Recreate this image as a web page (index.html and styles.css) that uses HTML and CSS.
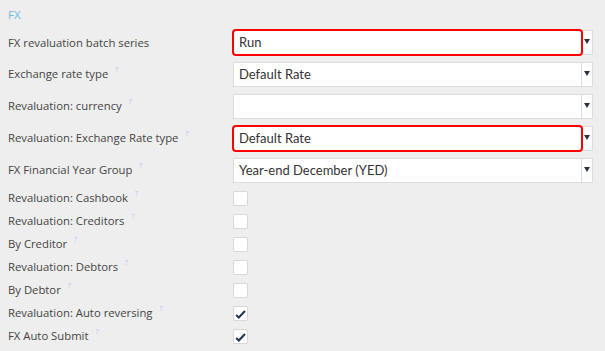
FILE: index.html
```html
<!DOCTYPE html>
<html lang="en">
<head>
    <meta charset="UTF-8">
    <title>FX settings</title>
    <link rel="stylesheet" href="styles.css">
</head>
<body>
    <div class="section">
        <div class="section-title">FX</div>

        <div class="row">
            <div class="label">FX revaluation batch series</div>
            <div class="select">
                <div class="select-box invalid">Run</div>
                <div class="select-btn"><span class="arrow"></span></div>
            </div>
        </div>
        <div class="row">
            <div class="label">Exchange rate type <span class="help">?</span></div>
            <div class="select">
                <div class="select-box">Default Rate</div>
                <div class="select-btn"><span class="arrow"></span></div>
            </div>
        </div>
        <div class="row">
            <div class="label">Revaluation: currency <span class="help">?</span></div>
            <div class="select">
                <div class="select-box"></div>
                <div class="select-btn"><span class="arrow"></span></div>
            </div>
        </div>
        <div class="row">
            <div class="label">Revaluation: Exchange Rate type <span class="help">?</span></div>
            <div class="select">
                <div class="select-box invalid">Default Rate</div>
                <div class="select-btn"><span class="arrow"></span></div>
            </div>
        </div>
        <div class="row">
            <div class="label">FX Financial Year Group <span class="help">?</span></div>
            <div class="select">
                <div class="select-box">Year-end December (YED)</div>
                <div class="select-btn"><span class="arrow"></span></div>
            </div>
        </div>

        <div class="checks">
            <div class="row check-row">
                <div class="label">Revaluation: Cashbook <span class="help">?</span></div>
                <div class="checkbox"></div>
            </div>
            <div class="row check-row">
                <div class="label">Revaluation: Creditors <span class="help">?</span></div>
                <div class="checkbox"></div>
            </div>
            <div class="row check-row">
                <div class="label">By Creditor <span class="help">?</span></div>
                <div class="checkbox"></div>
            </div>
            <div class="row check-row">
                <div class="label">Revaluation: Debtors <span class="help">?</span></div>
                <div class="checkbox"></div>
            </div>
            <div class="row check-row">
                <div class="label">By Debtor <span class="help">?</span></div>
                <div class="checkbox"></div>
            </div>
            <div class="row check-row">
                <div class="label">Revaluation: Auto reversing <span class="help">?</span></div>
                <div class="checkbox">
                    <svg width="15" height="15" viewBox="0 0 15 15"><path d="M3.2 9 L5.8 11.5 L12 5" fill="none" stroke="#1f3552" stroke-width="2"/></svg>
                </div>
            </div>
            <div class="row check-row">
                <div class="label">FX Auto Submit <span class="help">?</span></div>
                <div class="checkbox">
                    <svg width="15" height="15" viewBox="0 0 15 15"><path d="M3.2 9 L5.8 11.5 L12 5" fill="none" stroke="#1f3552" stroke-width="2"/></svg>
                </div>
            </div>
        </div>
    </div>
</body>
</html>
```

FILE: styles.css
```css
body {
    margin: 0;
    background-color: #eeeeee;
    font-family: Lato, "Open Sans", sans-serif;
    font-size: 13px;
    color: #444;
}
.section {
    padding: 0 8px;
}
.section-title {
    height: 26px;
    padding-top: 8px;
    box-sizing: border-box;
    line-height: 14px;
    font-family: "Open Sans", sans-serif;
    font-size: 11.5px;
    color: #6fb6ea;
}
.row {
    display: flex;
    align-items: center;
    height: 32px;
}
.label {
    width: 225px;
    flex-shrink: 0;
    font-family: "Open Sans", sans-serif;
    font-size: 11.3px;
    line-height: 15px;
}
.help {
    position: relative;
    top: -6px;
    font-size: 7px;
    color: #cbb8ec;
    margin-left: 4px;
}
.select {
    display: flex;
    width: 360px;
    height: 25px;
}
.select-box {
    flex: 1;
    height: 25px;
    box-sizing: border-box;
    border: 1px solid #dcdcdc;
    border-right: 0;
    background: #fff;
    padding: 0 5px;
    line-height: 23px;
    color: #333;
}
.select-box.invalid {
    position: relative;
    z-index: 1;
    height: 27px;
    margin: -1px -2px -1px -1px;
    border: 2px solid #f00;
    border-radius: 4px;
    padding: 0 4px 0 5px;
    line-height: 23px;
}
.select-btn {
    width: 12px;
    box-sizing: border-box;
    border: 1px solid #dcdcdc;
    background: #fff;
    display: flex;
    align-items: center;
    justify-content: center;
    padding-bottom: 2px;
}
.arrow {
    width: 0;
    height: 0;
    border-left: 3px solid transparent;
    border-right: 3px solid transparent;
    border-top: 5px solid #2a3548;
}
.checks {
    padding-top: 1px;
}
.check-row {
    height: 23px;
}
.checkbox {
    width: 15px;
    height: 15px;
    box-sizing: border-box;
    border: 1px solid #d8d8d8;
    border-radius: 2px;
    background: #fff;
    display: flex;
}
.checkbox svg {
    margin: -1px;
}
```
